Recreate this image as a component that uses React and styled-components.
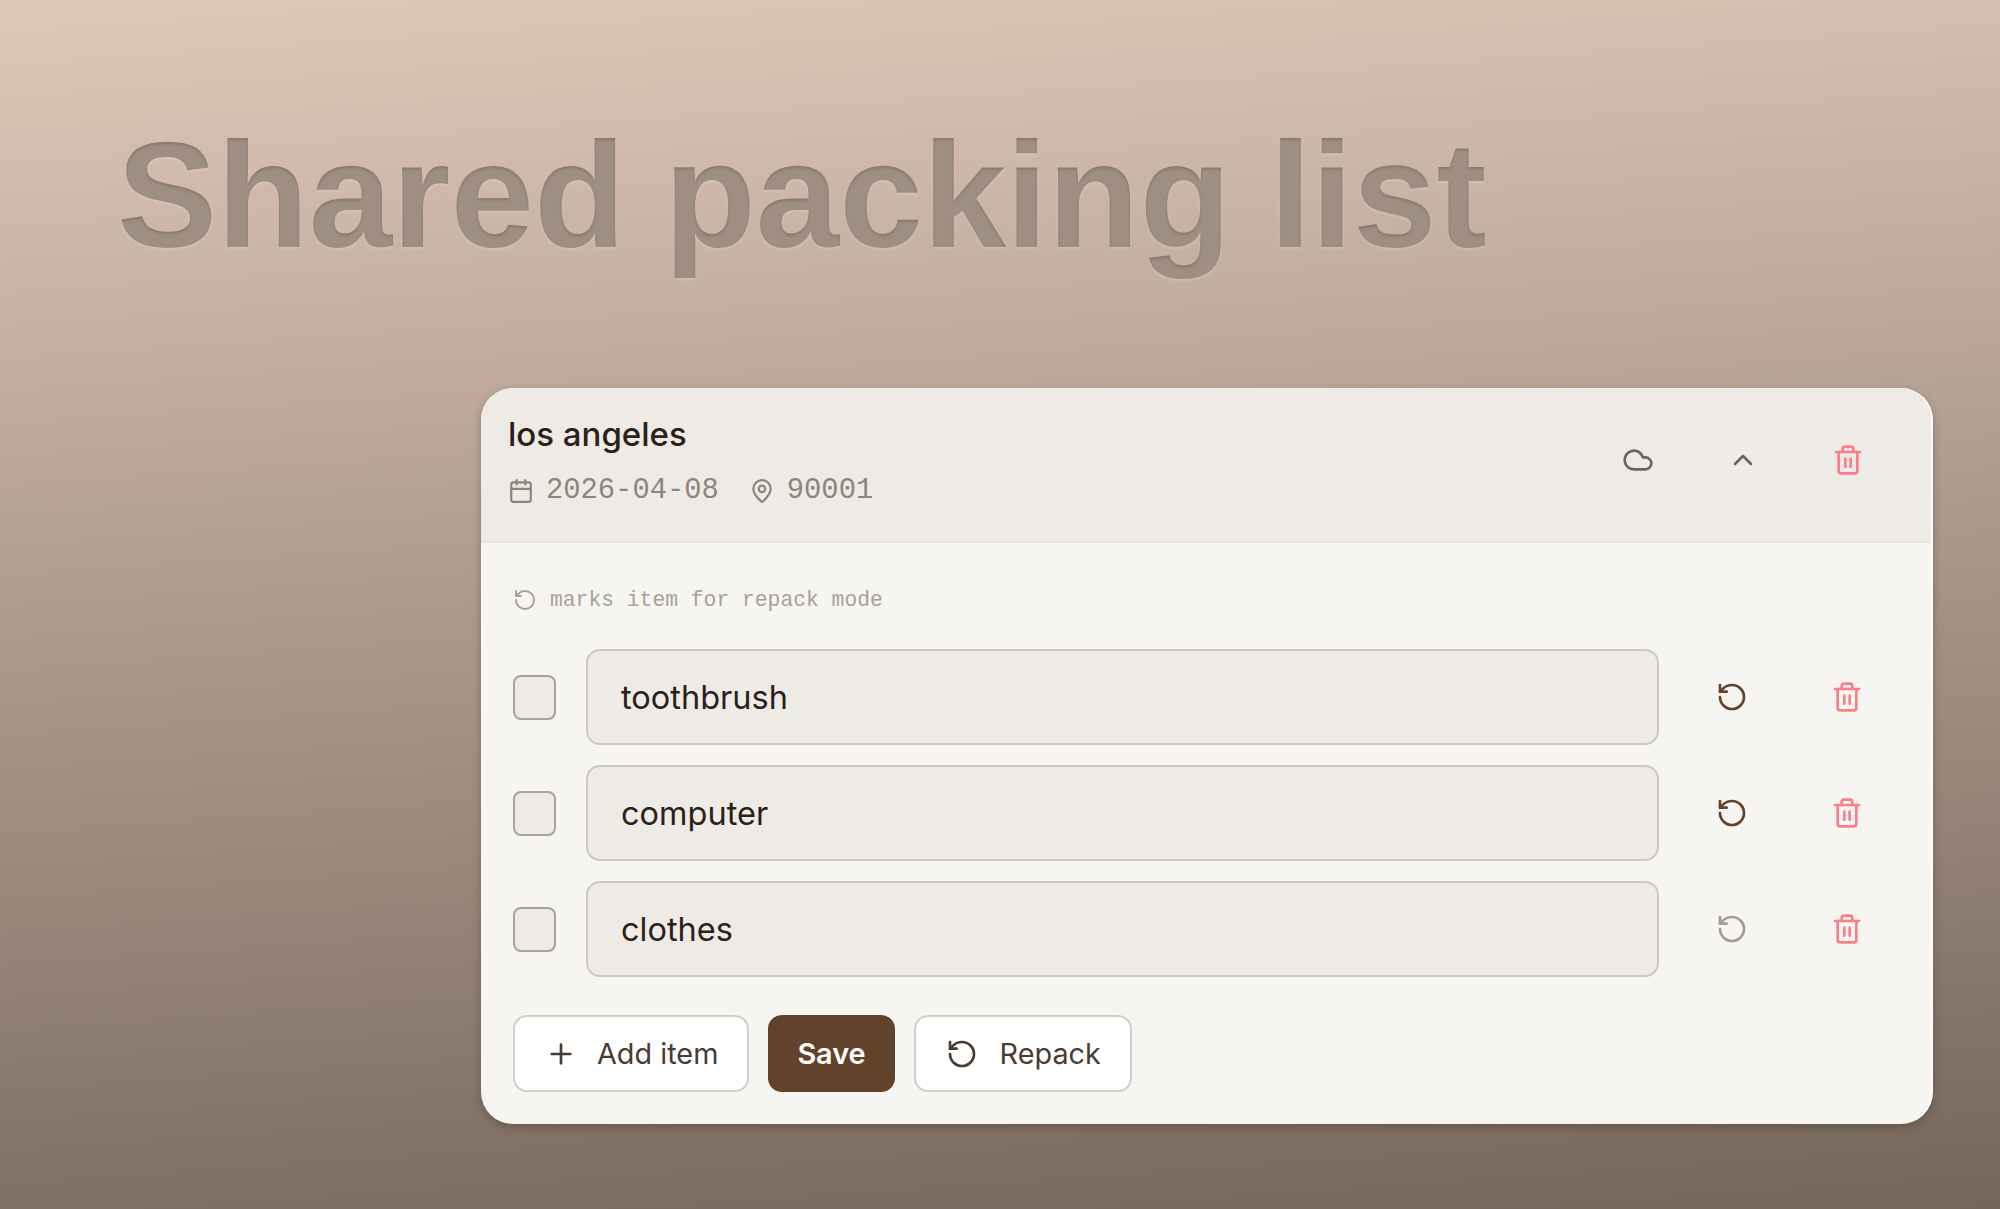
import React from 'react';
import styled, { createGlobalStyle } from 'styled-components';
import { Calendar, ChevronUp, Cloud, MapPin, Plus, RotateCcw, Trash2 } from 'lucide-react';

const GlobalStyle = createGlobalStyle`
  html, body {
    margin: 0;
    padding: 0;
    height: 100%;
  }
  body {
    font-family: Inter, "Liberation Sans", sans-serif;
    overflow: hidden;
  }
`;

const Page = styled.div`
  box-sizing: border-box;
  height: 1209px;
  padding: 111px 67px 0 117px;
  background: linear-gradient(176deg, #e0c8b8 0%, #75665b 100%);
`;

const Title = styled.h1`
  margin: 0 0 108px;
  font-family: "Liberation Sans", Arial, sans-serif;
  font-size: 150px;
  line-height: 169px;
  font-weight: 700;
  word-spacing: -3px;
  color: transparent;
  background-color: #8a7668;
  background-clip: text;
  -webkit-background-clip: text;
  text-shadow: 0 2px 3px rgba(255, 255, 255, 0.18);
`;

const Card = styled.section`
  margin-left: 364px;
  width: 1452px;
  height: 736px;
  box-sizing: border-box;
  background: #f6f5f1;
  border-radius: 32px;
  border-right: 2px solid #fff;
  box-shadow: 0 4px 8px rgba(60, 45, 35, 0.35);
  overflow: hidden;
`;

const CardHeader = styled.header`
  display: flex;
  align-items: flex-start;
  justify-content: space-between;
  box-sizing: border-box;
  height: 155px;
  padding: 24px 51px 0 27px;
  background: #eeebe6;
  border-bottom: 2px solid #e8e5df;
`;

const HeaderText = styled.div`
  display: flex;
  flex-direction: column;
  gap: 15px;
`;

const TripName = styled.div`
  font-size: 33px;
  line-height: 44px;
  font-weight: 500;
  color: #2b2119;
`;

const MetaRow = styled.div`
  display: flex;
  align-items: center;
  gap: 30px;
`;

const MetaItem = styled.span`
  display: inline-flex;
  align-items: center;
  gap: 12px;
  font-family: "Liberation Mono", "DejaVu Sans Mono", monospace;
  font-size: 28.8px;
  line-height: 40px;
  color: #8d857c;
`;

const Actions = styled.div`
  display: flex;
  align-items: center;
  gap: ${(p) => p.$gap}px;
  margin-top: ${(p) => p.$top || 0}px;
`;

const IconButton = styled.button`
  display: flex;
  align-items: center;
  justify-content: center;
  width: 64px;
  height: 64px;
  padding: 0;
  border: 0;
  background: transparent;
  color: ${(p) => p.$color};
`;

const CardBody = styled.div`
  padding: 37px 54px 0 32px;
`;

const Hint = styled.div`
  display: flex;
  align-items: center;
  gap: 13px;
  height: 40px;
  margin-bottom: 29px;
  font-family: "Liberation Mono", "DejaVu Sans Mono", monospace;
  font-size: 21.33px;
  color: #a8a199;
`;

const Items = styled.div`
  display: flex;
  flex-direction: column;
  gap: 20px;
`;

const ItemRow = styled.div`
  display: flex;
  align-items: center;
  gap: 30px;
`;

const Checkbox = styled.span`
  flex: none;
  box-sizing: border-box;
  width: 43px;
  height: 45px;
  background: #eeebe6;
  border: 2px solid #a8a39b;
  border-radius: 8px;
`;

const ItemInput = styled.div`
  flex: none;
  display: flex;
  align-items: center;
  box-sizing: border-box;
  width: 1073px;
  height: 96px;
  padding: 0 33px;
  margin-right: 11px;
  background: #eeebe6;
  border: 2px solid #cdc9c2;
  border-radius: 14px;
  font-size: 32.5px;
  color: #2b2119;
`;

const Footer = styled.div`
  display: flex;
  gap: 19px;
  margin-top: 38px;
`;

const Button = styled.button`
  display: flex;
  align-items: center;
  gap: ${(p) => p.$gap || 0}px;
  box-sizing: border-box;
  height: 77px;
  padding: 0 ${(p) => (p.$primary ? 27 : 29)}px 0 ${(p) => (p.$primary ? 27 : 30)}px;
  border: 2px solid ${(p) => (p.$primary ? '#63422c' : '#d3cfc8')};
  border-radius: 14px;
  background: ${(p) => (p.$primary ? '#63422c' : '#ffffff')};
  color: ${(p) => (p.$primary ? '#ffffff' : '#4a3c32')};
  font-family: Inter, "Liberation Sans", sans-serif;
  font-size: 28.8px;
  font-weight: ${(p) => (p.$primary ? 600 : 400)};
`;

const items = [
  { name: 'toothbrush', repack: '#63422c' },
  { name: 'computer', repack: '#63422c' },
  { name: 'clothes', repack: '#a39d95' },
];

const TRASH = '#fb7e88';

const App = () => (
  <Page>
    <GlobalStyle />
    <Title>Shared packing list</Title>
    <Card>
      <CardHeader>
        <HeaderText>
          <TripName>los angeles</TripName>
          <MetaRow>
            <MetaItem>
              <Calendar size={26} strokeWidth={2} />
              2026-04-08
            </MetaItem>
            <MetaItem>
              <MapPin size={26} strokeWidth={2} />
              90001
            </MetaItem>
          </MetaRow>
        </HeaderText>
        <Actions $gap={41} $top={16}>
          <IconButton $color="#6c655d"><Cloud size={32} strokeWidth={2} /></IconButton>
          <IconButton $color="#6c655d"><ChevronUp size={32} strokeWidth={2} /></IconButton>
          <IconButton $color={TRASH}><Trash2 size={32} strokeWidth={2} /></IconButton>
        </Actions>
      </CardHeader>
      <CardBody>
        <Hint>
          <RotateCcw size={24} strokeWidth={2} />
          marks item for repack mode
        </Hint>
        <Items>
          {items.map((item) => (
            <ItemRow key={item.name}>
              <Checkbox />
              <ItemInput>{item.name}</ItemInput>
              <Actions $gap={51}>
                <IconButton $color={item.repack}><RotateCcw size={32} strokeWidth={2} /></IconButton>
                <IconButton $color={TRASH}><Trash2 size={32} strokeWidth={2} /></IconButton>
              </Actions>
            </ItemRow>
          ))}
        </Items>
        <Footer>
          <Button $gap={20}><Plus size={32} strokeWidth={2} />Add item</Button>
          <Button $primary>Save</Button>
          <Button $gap={22}><RotateCcw size={32} strokeWidth={2} />Repack</Button>
        </Footer>
      </CardBody>
    </Card>
  </Page>
);

export default App;
